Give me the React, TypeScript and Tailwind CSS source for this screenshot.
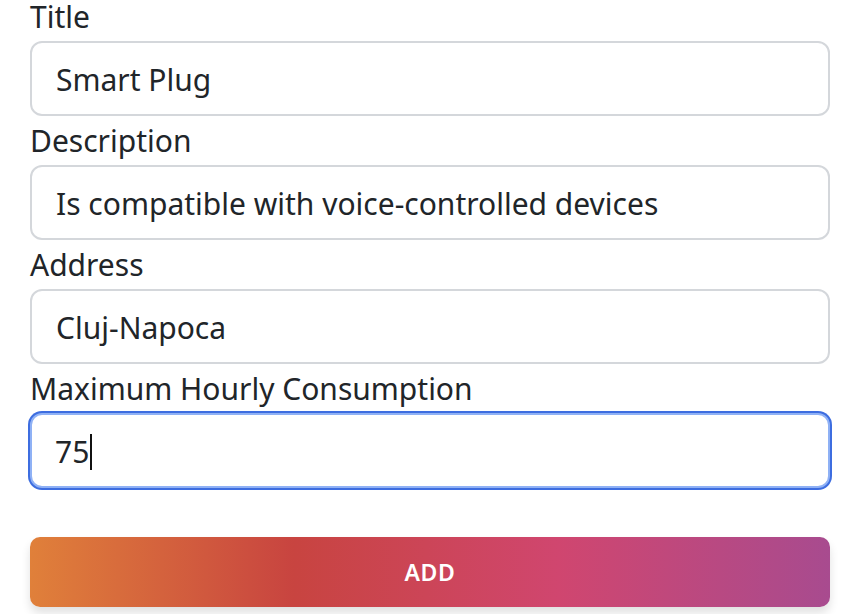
import React from "react";

const fields = [
  { label: "Title", value: "Smart Plug" },
  { label: "Description", value: "Is compatible with voice-controlled devices" },
  { label: "Address", value: "Cluj-Napoca" },
];

export default function App() {
  return (
    <div
      className="w-[864px] h-[614px] overflow-hidden bg-white text-[#212529]"
      style={{ fontFamily: '"Noto Sans", "Open Sans", sans-serif' }}
    >
      <form className="-mt-[8px] px-[30px] flex flex-col w-[860px]">
        {fields.map((f) => (
          <div key={f.label} className="flex flex-col">
            <label className="text-[30px] leading-[48px] pt-[1px]">{f.label}</label>
            <input
              readOnly
              defaultValue={f.value}
              className="h-[75px] w-full rounded-[12px] border-2 border-[#d4d7db] bg-white px-[24px] pt-[2px] text-[30px] text-[#212529] outline-none"
            />
          </div>
        ))}
        <div className="flex flex-col">
          <label className="text-[30px] leading-[48px] pt-[1px]">Maximum Hourly Consumption</label>
          <div className="h-[75px] w-full rounded-[12px] border-2 border-[#8fb1f5] ring-2 ring-[#3d6de0] bg-white px-[23px] pt-[2px] flex items-center text-[30px]">
            <span>75</span>
            <span className="ml-[1px] w-[2px] h-[36px] bg-[#111]" />
          </div>
        </div>
        <button
          type="button"
          className="mt-[49px] h-[70px] w-full rounded-[10px] text-white text-[23px] font-semibold tracking-wide shadow-[0_6px_10px_rgba(0,0,0,0.12)] bg-[linear-gradient(to_right,#e0803a_0%,#c84440_33%,#d0466f_66%,#a84b8f_100%)]"
        >
          ADD
        </button>
      </form>
    </div>
  );
}
